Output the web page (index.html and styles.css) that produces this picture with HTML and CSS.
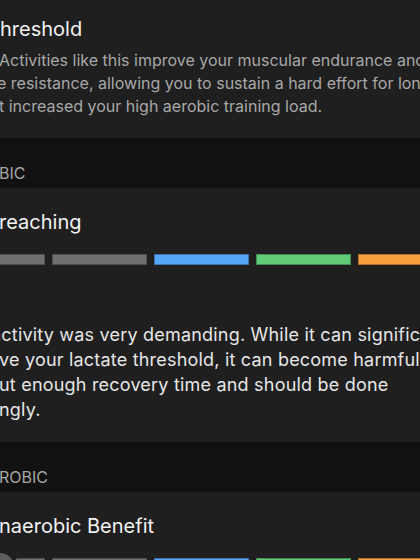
FILE: index.html
```html
<!DOCTYPE html>
<html lang="en">
  <head>
    <meta charset="UTF-8" />
    <meta name="viewport" content="width=device-width, initial-scale=1.0" />
    <title>Training Effect</title>
    <link rel="stylesheet" href="styles.css">
  </head>
  <body>
  <div class="screen">
    <!-- primary benefit -->
    <div class="card card-first">
      <div class="title">hreshold</div>
      <div class="note">
        <div class="line nudge-s">Activities like this improve your muscular endurance and</div>
        <div class="line nudge-m">e resistance, allowing you to sustain a hard effort for longer.</div>
        <div class="line nudge-s">t increased your high aerobic training load.</div>
      </div>
    </div>

    <div class="group-label"><span class="nudge-s">BIC</span></div>

    <!-- aerobic -->
    <div class="card">
      <div class="title nudge-s">reaching</div>
      <div class="scale">
        <div class="bar grey"></div>
        <div class="bar grey"></div>
        <div class="bar blue"></div>
        <div class="bar green"></div>
        <div class="bar orange"></div>
      </div>
      <div class="desc">
        <div class="line nudge-l">activity was very demanding. While it can significantly</div>
        <div class="line nudge-s">ve your lactate threshold, it can become harmful</div>
        <div class="line nudge-s">ut enough recovery time and should be done</div>
        <div class="line nudge-s">ngly.</div>
      </div>
    </div>

    <div class="group-label"><span class="nudge-s">ROBIC</span></div>

    <!-- anaerobic -->
    <div class="card">
      <div class="title nudge-s">naerobic Benefit</div>
      <div class="scale">
        <div class="bar grey"></div>
        <div class="bar grey"></div>
        <div class="bar blue"></div>
        <div class="bar green"></div>
        <div class="bar orange"></div>
        <div class="marker"></div>
      </div>
    </div>
  </div>
  </body>
</html>
```

FILE: styles.css
```css
body {
  margin: 0;
  background-color: #111111;
  font-family: Inter, "Liberation Sans", sans-serif;
  overflow: hidden;
}
.screen {
  width: 420px;
  overflow: hidden;
}
.card {
  background-color: #1f1f1f;
  padding: 22px 0 20px 0;
}
.card-first {
  padding-top: 17px;
}
.title {
  font-size: 20px;
  line-height: 24px;
  color: #f2f2f2;
  white-space: nowrap;
}
.note {
  margin-top: 8px;
  font-size: 16px;
  line-height: 23px;
  color: #a8a8a8;
}
.desc {
  margin-top: 57px;
  font-size: 18px;
  line-height: 25px;
  letter-spacing: 0.2px;
  color: #e6e6e6;
}
.line {
  white-space: nowrap;
}
.nudge-s {
  margin-left: -1px;
}
.nudge-m {
  margin-left: -3px;
}
.nudge-l {
  margin-left: -9px;
}
.group-label {
  height: 50px;
  box-sizing: border-box;
  padding-top: 25px;
  font-size: 16px;
  line-height: 20px;
  color: #a6a6a6;
  display: flex;
}
.scale {
  position: relative;
  display: flex;
  gap: 7px;
  margin-top: 20px;
  margin-left: -50px;
}
.bar {
  flex: 0 0 95px;
  height: 11px;
  box-sizing: border-box;
  border: 1px solid rgba(0, 0, 0, 0.3);
}
.grey {
  background-color: #707070;
}
.blue {
  background-color: #55a6f6;
}
.green {
  background-color: #62cb77;
}
.orange {
  background-color: #f6a13d;
}
/* current value dot sitting on the first segment */
.marker {
  position: absolute;
  left: 32px;
  top: -9px;
  width: 28px;
  height: 28px;
  border-radius: 50%;
  background-color: #5c5c5c;
  border: 4px solid #1f1f1f;
}
```
